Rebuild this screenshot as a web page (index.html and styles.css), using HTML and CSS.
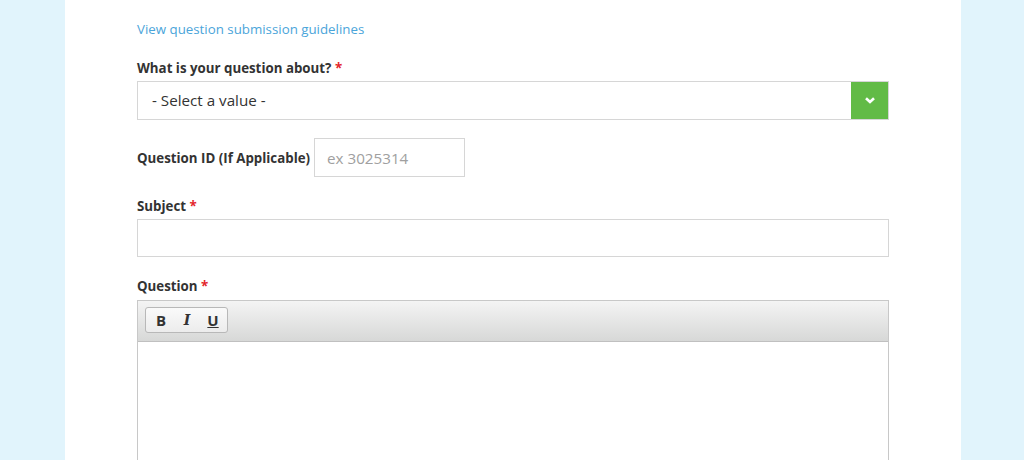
FILE: index.html
```html
<!DOCTYPE html>
<html lang="en">
<head>
    <meta charset="UTF-8">
    <title>Ask a question</title>
    <link rel="stylesheet" href="styles.css">
</head>
<body>
    <div class="panel">
        <a class="guide-link" href="#">View question submission guidelines</a>

        <label class="field-label">What is your question about? <span class="req">*</span></label>
        <div class="select-box">
            <span class="select-text">- Select a value -</span>
            <span class="select-btn">
                <svg width="12" height="9" viewBox="0 0 12 9"><path d="M2 2.2 L6 6 L10 2.2" fill="none" stroke="#fff" stroke-width="2.6"/></svg>
            </span>
        </div>

        <div class="inline-row">
            <label class="inline-label">Question ID (If Applicable)</label>
            <input class="small-input" type="text" placeholder="ex 3025314">
        </div>

        <label class="field-label">Subject <span class="req">*</span></label>
        <input class="text-input" type="text">

        <label class="field-label">Question <span class="req">*</span></label>
        <div class="editor">
            <div class="toolbar">
                <div class="btn-group">
                    <span class="tb-btn tb-b">B</span>
                    <span class="tb-btn tb-i">I</span>
                    <span class="tb-btn tb-u">U</span>
                </div>
            </div>
            <div class="editor-body"></div>
        </div>
    </div>
</body>
</html>
```

FILE: styles.css
```css
body {
    margin: 0;
    background-color: #e1f4fc;
    font-family: 'Open Sans', Arial, sans-serif;
    color: #333;
    height: 460px;
    overflow: hidden;
}

.panel {
    margin-left: 65px;
    width: 896px;
    height: 460px;
    background-color: white;
    padding: 19px 72px 0 72px;
    box-sizing: border-box;
    display: flex;
    flex-direction: column;
    align-items: flex-start;
}

.guide-link {
    color: #4ba5da;
    text-decoration: none;
    font-size: 13.3px;
    line-height: 20px;
}

.field-label {
    font-size: 13.3px;
    font-weight: 700;
    line-height: 20px;
    color: #333;
    margin-top: 19px;
    margin-bottom: 3px;
}

.req {
    color: #e3262b;
}

.select-box {
    width: 752px;
    height: 39px;
    box-sizing: border-box;
    border: 1px solid #d6d6d6;
    display: flex;
    align-items: center;
    justify-content: space-between;
}

.select-text {
    padding-left: 14px;
    padding-bottom: 2px;
    font-size: 15.2px;
    color: #333;
}

.select-btn {
    width: 37px;
    height: 37px;
    background-color: #62bb46;
    display: flex;
    align-items: center;
    justify-content: center;
}

.inline-row {
    margin-top: 18px;
    display: flex;
    align-items: center;
    gap: 4px;
}

.inline-label {
    font-size: 13.3px;
    font-weight: 700;
    color: #333;
}

.small-input {
    width: 151px;
    height: 39px;
    box-sizing: border-box;
    border: 1px solid #d6d6d6;
    padding: 0 12px;
    font-family: 'Open Sans', Arial, sans-serif;
    font-size: 15.2px;
    outline: none;
}

.small-input::placeholder {
    color: #a0a0a0;
}

.text-input {
    width: 752px;
    height: 38px;
    box-sizing: border-box;
    border: 1px solid #d6d6d6;
    margin: 0;
    outline: none;
}

.editor {
    width: 752px;
    flex: 1;
    margin-top: 1px;
    box-sizing: border-box;
    border: 1px solid #c8c8c8;
    border-bottom: none;
    display: flex;
    flex-direction: column;
}

.toolbar {
    height: 41px;
    box-sizing: border-box;
    background: linear-gradient(#f4f4f4, #d7d8d7);
    border-bottom: 1px solid #c0c0c0;
    padding: 6px 0 0 7px;
}

.btn-group {
    display: inline-flex;
    align-items: center;
    height: 26px;
    width: 83px;
    box-sizing: border-box;
    border: 1px solid #b8b8b8;
    border-radius: 3px;
    background: linear-gradient(#fafafa, #ececec);
    padding-left: 2px;
}

.tb-btn {
    width: 26px;
    text-align: center;
    font-size: 15px;
    font-weight: 700;
    color: #333;
    font-family: 'Open Sans', Arial, sans-serif;
}

.tb-i {
    font-style: italic;
    font-family: 'DejaVu Serif', serif;
    font-size: 14px;
}

.tb-u {
    text-decoration: underline;
}

.editor-body {
    flex: 1;
    background: white;
}
```
